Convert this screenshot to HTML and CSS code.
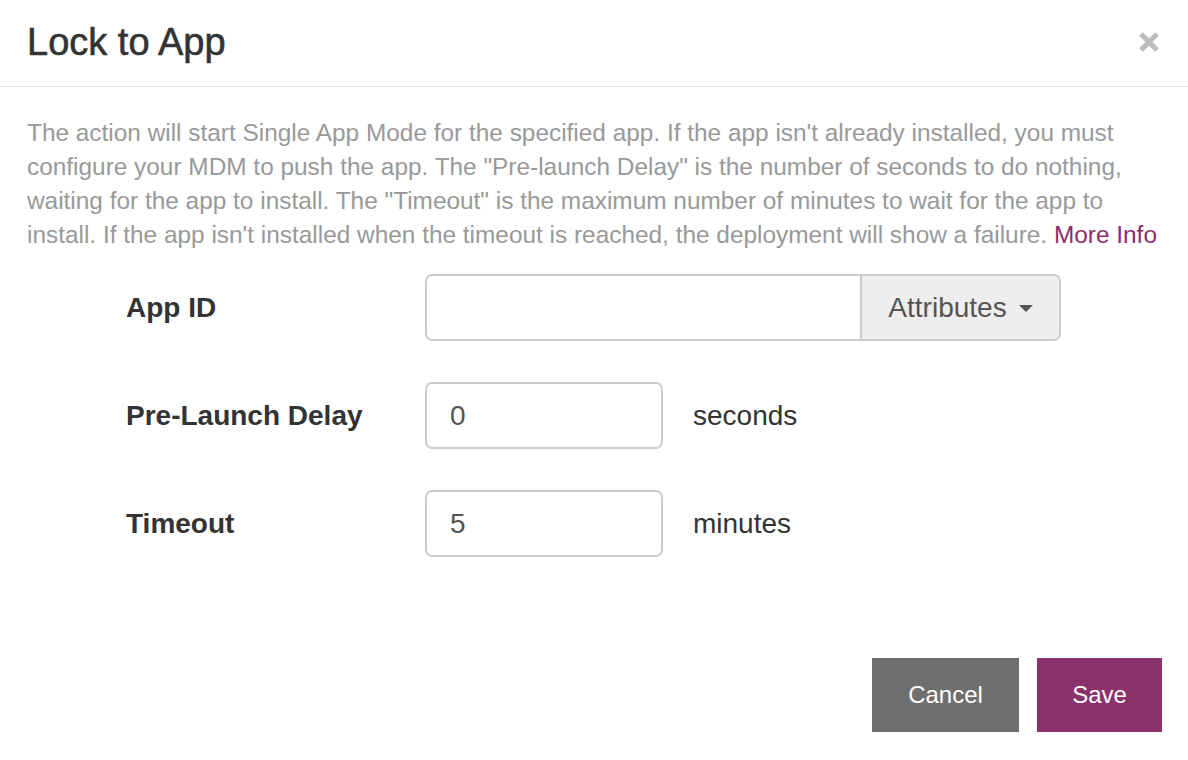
FILE: index.html
```html
<!DOCTYPE html>
<html>
<head>
<meta charset="utf-8">
<link rel="stylesheet" href="styles.css">
</head>
<body>
<div class="modal">
  <div class="modal-header">
    <h4 class="modal-title">Lock to App</h4>
    <button class="close" aria-label="Close">
      <svg width="22" height="20" viewBox="0 0 22 20"><path d="M3 2 L19 18 M19 2 L3 18" stroke="#bcbcbc" stroke-width="5" stroke-linecap="butt"/></svg>
    </button>
  </div>
  <div class="modal-body">
    <p class="desc">The action will start Single App Mode for the specified app. If the app isn't already installed, you must configure your MDM to push the app. The "Pre-launch Delay" is the number of seconds to do nothing, waiting for the app to install. The "Timeout" is the maximum number of minutes to wait for the app to install. If the app isn't installed when the timeout is reached, the deployment will show a failure. <a class="link" href="#">More Info</a></p>
    <div class="form">
      <div class="row">
        <label class="label">App ID</label>
        <div class="input-group">
          <input class="input input-main" type="text" value="">
          <div class="addon">Attributes <span class="caret"></span></div>
        </div>
      </div>
      <div class="row">
        <label class="label">Pre-Launch Delay</label>
        <input class="input input-small" type="text" value="0">
        <span class="unit">seconds</span>
      </div>
      <div class="row">
        <label class="label">Timeout</label>
        <input class="input input-small" type="text" value="5">
        <span class="unit">minutes</span>
      </div>
    </div>
  </div>
  <div class="modal-footer">
    <button class="btn btn-cancel">Cancel</button>
    <button class="btn btn-save">Save</button>
  </div>
</div>
</body>
</html>
```
FILE: styles.css
```css
* { box-sizing: border-box; }
html, body { margin: 0; padding: 0; background: #fff; }
body {
  font-family: "Liberation Sans", Arial, Helvetica, sans-serif;
  color: #333;
  width: 1188px;
  height: 760px;
  overflow: hidden;
}
.modal { width: 1188px; }
.modal-header {
  height: 87px;
  border-bottom: 1px solid #e5e5e5;
  display: flex;
  align-items: center;
  justify-content: space-between;
  padding: 0 28px 2px 27px;
}
.modal-title {
  margin: 0;
  font-size: 38px;
  font-weight: 400;
  color: #333;
  line-height: 1;
  -webkit-text-stroke: 0.6px #333;
}
.close {
  border: 0;
  background: none;
  padding: 0;
  margin: 0;
  display: flex;
  cursor: pointer;
}
.modal-body { padding: 29px 27px 0 27px; }
.desc {
  margin: 0;
  font-size: 24.4px;
  line-height: 34px;
  color: #999;
}
.link { color: #8b2f6b; text-decoration: none; }
.form {
  display: flex;
  flex-direction: column;
  gap: 41px;
  margin-top: 22px;
  padding-left: 99px;
}
.row {
  display: flex;
  align-items: center;
  height: 67px;
}
.label {
  width: 299px;
  font-size: 28px;
  font-weight: 700;
  color: #333;
}
.input {
  height: 67px;
  border: 2px solid #ccc;
  border-radius: 7px;
  font-family: "Liberation Sans", Arial, sans-serif;
  font-size: 28px;
  color: #555;
  padding: 0 23px;
  outline: none;
  background: #fff;
}
.input-group { display: flex; height: 67px; }
.input-main {
  width: 437px;
  border-radius: 7px 0 0 7px;
}
.addon {
  width: 199px;
  height: 67px;
  border: 2px solid #ccc;
  border-left: 0;
  border-radius: 0 7px 7px 0;
  background: #eee;
  display: flex;
  align-items: center;
  justify-content: center;
  gap: 12px;
  font-size: 28px;
  color: #555;
}
.caret {
  width: 0;
  height: 0;
  border-left: 7px solid transparent;
  border-right: 7px solid transparent;
  border-top: 7px solid #555;
  margin-top: 2px;
}
.input-small { width: 238px; }
.unit {
  margin-left: 30px;
  font-size: 28px;
  color: #333;
}
.modal-footer {
  display: flex;
  justify-content: flex-end;
  gap: 18px;
  padding: 0 26px 0 0;
  margin-top: 101px;
}
.btn {
  height: 74px;
  border: 0;
  border-radius: 0;
  font-family: "Liberation Sans", Arial, sans-serif;
  font-size: 24px;
  color: #fff;
  cursor: pointer;
}
.btn-cancel { width: 147px; background: #6f6f6f; }
.btn-save { width: 125px; background: #8b326c; }
```
